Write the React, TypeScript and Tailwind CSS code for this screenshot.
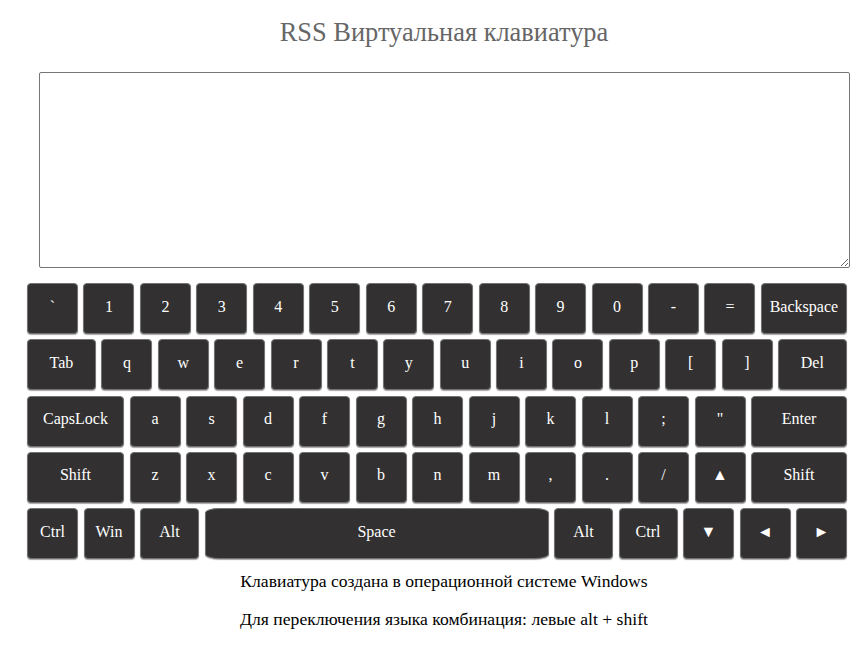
import React from "react";

type K = { l: string; w: number; space?: boolean };

const rows: K[][] = [
  [
    { l: "`", w: 51 }, { l: "1", w: 51 }, { l: "2", w: 51 }, { l: "3", w: 51 }, { l: "4", w: 51 },
    { l: "5", w: 51 }, { l: "6", w: 51 }, { l: "7", w: 51 }, { l: "8", w: 51 }, { l: "9", w: 51 },
    { l: "0", w: 51 }, { l: "-", w: 51 }, { l: "=", w: 51 }, { l: "Backspace", w: 86 },
  ],
  [
    { l: "Tab", w: 69 }, { l: "q", w: 51 }, { l: "w", w: 51 }, { l: "e", w: 51 }, { l: "r", w: 51 },
    { l: "t", w: 51 }, { l: "y", w: 51 }, { l: "u", w: 51 }, { l: "i", w: 51 }, { l: "o", w: 51 },
    { l: "p", w: 51 }, { l: "[", w: 51 }, { l: "]", w: 51 }, { l: "Del", w: 69 },
  ],
  [
    { l: "CapsLock", w: 97 }, { l: "a", w: 51 }, { l: "s", w: 51 }, { l: "d", w: 51 }, { l: "f", w: 51 },
    { l: "g", w: 51 }, { l: "h", w: 51 }, { l: "j", w: 51 }, { l: "k", w: 51 }, { l: "l", w: 51 },
    { l: ";", w: 51 }, { l: "\"", w: 51 }, { l: "Enter", w: 96 },
  ],
  [
    { l: "Shift", w: 97 }, { l: "z", w: 51 }, { l: "x", w: 51 }, { l: "c", w: 51 }, { l: "v", w: 51 },
    { l: "b", w: 51 }, { l: "n", w: 51 }, { l: "m", w: 51 }, { l: ",", w: 51 }, { l: ".", w: 51 },
    { l: "/", w: 51 }, { l: "▲", w: 51 }, { l: "Shift", w: 96 },
  ],
  [
    { l: "Ctrl", w: 51 }, { l: "Win", w: 51 }, { l: "Alt", w: 59 }, { l: "Space", w: 344, space: true },
    { l: "Alt", w: 59 }, { l: "Ctrl", w: 59 }, { l: "▼", w: 51 }, { l: "◄", w: 51 }, { l: "►", w: 51 },
  ],
];

function Key({ k }: { k: K }) {
  return (
    <div
      style={{ width: k.w }}
      className={
        "h-[51px] shrink-0 flex items-center justify-center pb-[4px] bg-[#323031] text-white text-[16px] border border-[#737373] shadow-[0_1px_1px_rgba(0,0,0,0.35)] " +
        (k.space ? "rounded-[14px/5px]" : "rounded-[4px]")
      }
    >
      {k.l}
    </div>
  );
}

export default function App() {
  return (
    <div
      className="w-[868px] h-[650px] bg-white flex flex-col"
      style={{ fontFamily: '"Liberation Serif", "Times New Roman", serif' }}
    >
      <div className="pt-[17px] h-[72px] text-center text-[26.4px] leading-[30px] text-[#666666] pl-[20px]">
        RSS Виртуальная клавиатура
      </div>
      <div className="pl-[39px]">
        <textarea className="block w-[811px] h-[196px] border border-[#767676] rounded-[2px] resize-y outline-none" />
      </div>
      <div className="pl-[27px] pt-[15px] flex flex-col gap-[5.3px]">
        {rows.map((r, i) => (
          <div key={i} className="w-[820px] flex justify-between">
            {r.map((k, j) => (
              <Key key={j} k={k} />
            ))}
          </div>
        ))}
      </div>
      <div className="pt-[12px] pl-[20px] text-center text-[17.6px] leading-[21px] text-black">
        Клавиатура создана в операционной системе Windows
      </div>
      <div className="pt-[17px] pl-[20px] text-center text-[17.6px] leading-[21px] text-black">
        Для переключения языка комбинация: левые alt + shift
      </div>
    </div>
  );
}
